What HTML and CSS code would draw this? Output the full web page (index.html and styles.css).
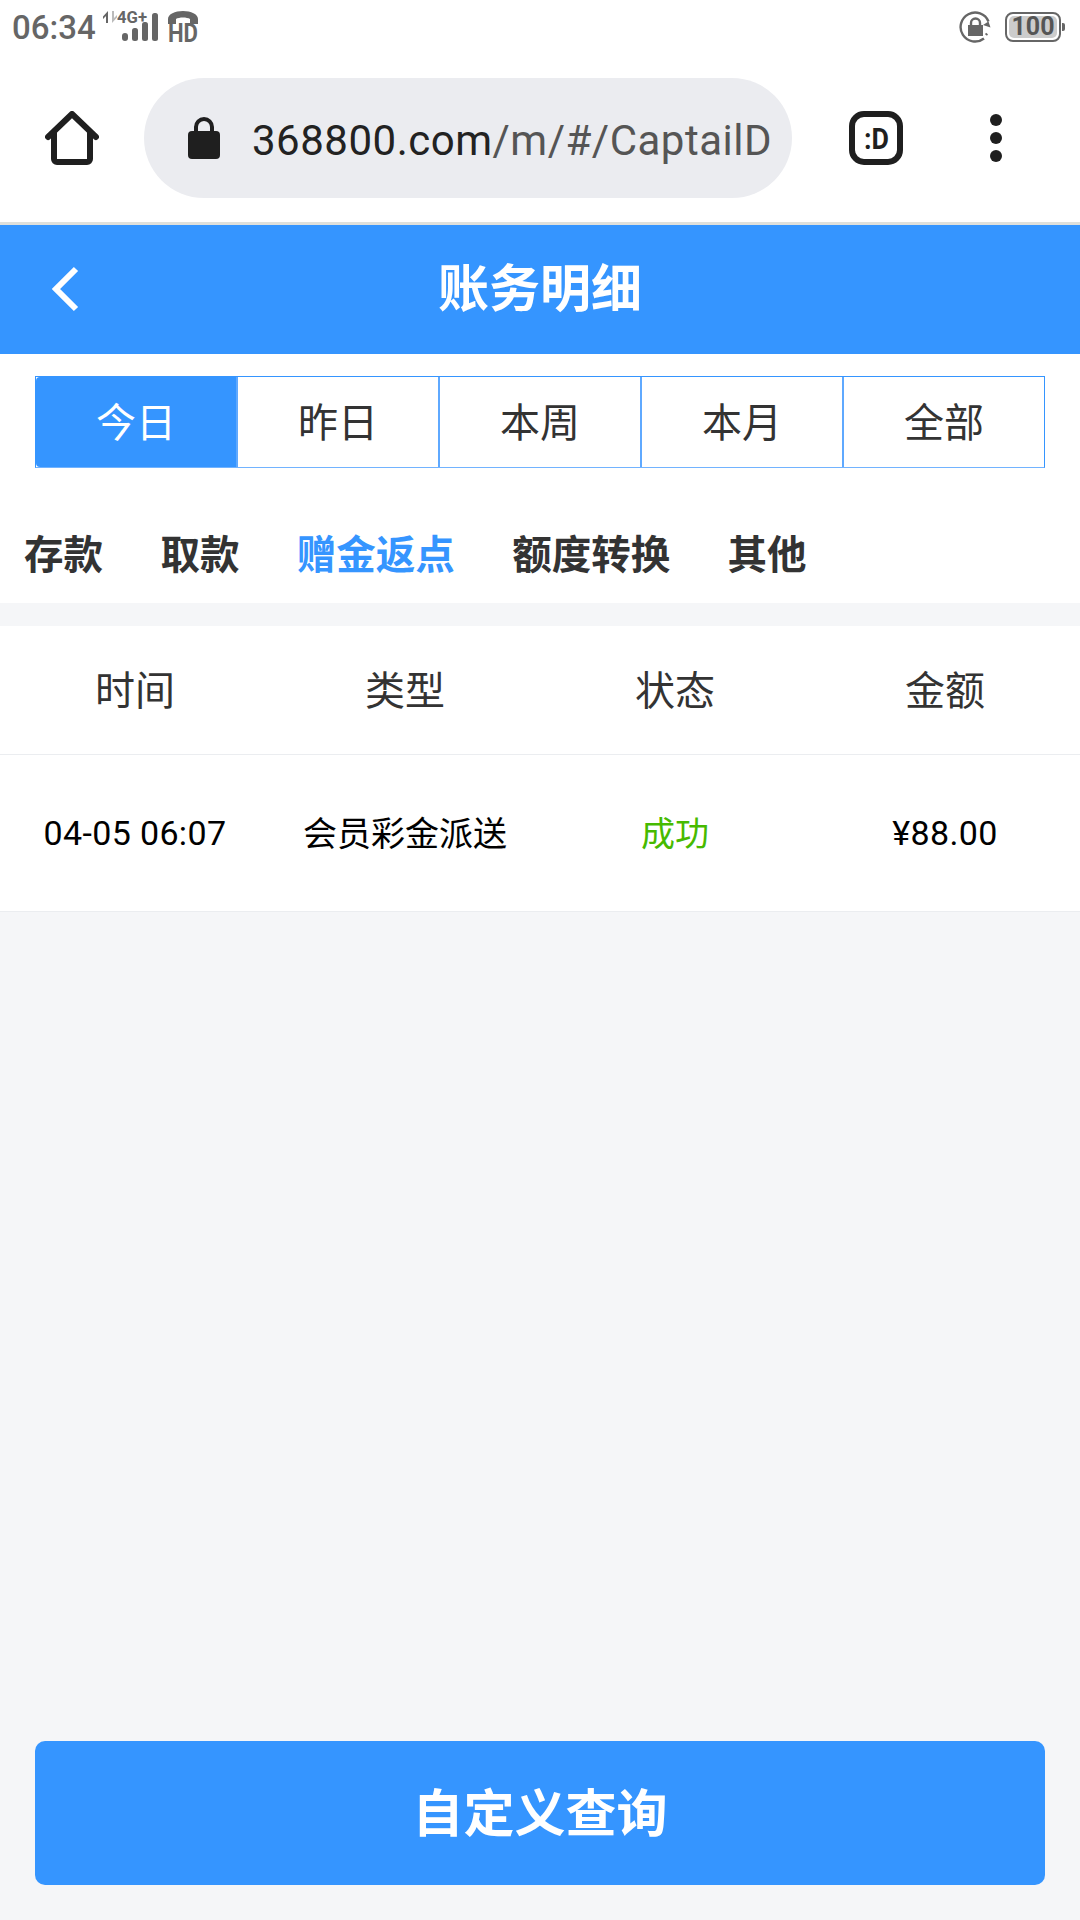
FILE: index.html
```html
<!DOCTYPE html>
<html lang="zh">
<head>
<meta charset="utf-8">
<title>账务明细</title>
<link rel="stylesheet" href="styles.css">
</head>
<body>
<div class="page">
  <div class="status">
    <div class="status-left">
      <span class="clock">06:34</span>
      <svg class="signal" width="60" height="36" viewBox="0 0 60 36">
        <path d="M5 5v12H3v-7l-3 3v-2.500z" fill="#666"/>
        <path d="M9 17V5h2v7l3-3v2.500z" fill="#bbb"/>
        <text x="14" y="17" class="signal-text" textLength="30" lengthAdjust="spacingAndGlyphs">4G+</text>
        <rect x="19" y="27" width="6" height="8" rx="3" fill="#666"/>
        <rect x="29" y="22" width="6" height="13" rx="2.500" fill="#666"/>
        <rect x="39" y="16" width="6" height="19" rx="2.500" fill="#666"/>
        <rect x="49" y="7" width="6" height="28" rx="2.500" fill="#666"/>
      </svg>
      <svg class="hd" width="40" height="40" viewBox="-5 0 40 40">
        <path d="M0 13V8C0 3 7 0 15 0s15 3 15 8v5h-8V8c-3-2-11-2-14 0v5z" fill="#666"/>
        <text x="0" y="31" class="hd-text" textLength="30" lengthAdjust="spacingAndGlyphs">HD</text>
      </svg>
    </div>
    <div class="status-right">
      <svg class="rotate" width="32" height="32" viewBox="0 0 32 32">
        <path d="M29.500 10.500A14.500 14.500 0 1 0 25 27.500M27 24l1-1.500" fill="none" stroke="#666" stroke-width="2.400"/>
        <path d="M24 14l5.500-3.500 2 6z" fill="#666"/>
        <rect x="9" y="14" width="15" height="11" fill="#666"/>
        <path d="M12 14v-2a4.500 4.500 0 0 1 9 0v2" fill="none" stroke="#666" stroke-width="2.400"/>
      </svg>
      <span class="battery"><span class="battery-fill">100</span></span>
      <span class="battery-tip"></span>
    </div>
  </div>

  <div class="browser">
    <svg class="home" width="54" height="54" viewBox="0 0 54 54"><path d="M3 26 27 3l24 23M9 21v27a3 3 0 0 0 3 3h30a3 3 0 0 0 3-3V21" fill="none" stroke="#1f1f1f" stroke-width="6" stroke-linecap="round" stroke-linejoin="round"/></svg>
    <div class="url">
      <svg class="lock" width="32" height="42" viewBox="0 0 32 42"><path d="M8 16V10a8 8 0 0 1 16 0v6" fill="none" stroke="#1f1f1f" stroke-width="4"/><rect y="14" width="32" height="28" rx="4" fill="#1f1f1f"/></svg>
      <span class="url-text"><span class="domain">368800.com</span>/m/#/CaptailD</span>
    </div>
    <svg class="tab" width="54" height="54" viewBox="0 0 54 54"><rect x="3" y="3" width="48" height="48" rx="12" fill="none" stroke="#1f1f1f" stroke-width="6"/><text x="15" y="38" class="tab-text" textLength="25" lengthAdjust="spacingAndGlyphs">:D</text></svg>
    <svg class="more" width="12" height="48" viewBox="0 0 12 48"><circle cx="6" cy="6" r="6" fill="#1f1f1f"/><circle cx="6" cy="24" r="6" fill="#1f1f1f"/><circle cx="6" cy="42" r="6" fill="#1f1f1f"/></svg>
  </div>

  <header class="title-bar">
    <svg class="back" width="30" height="46" viewBox="0 0 30 46"><path d="M26 3 6 23l20 20" fill="none" stroke="#fff" stroke-width="6"/></svg>
    <h1 class="title">账务明细</h1>
  </header>

  <section class="filters">
    <div class="range">
      <span class="range-item active">今日</span>
      <span class="range-item">昨日</span>
      <span class="range-item">本周</span>
      <span class="range-item">本月</span>
      <span class="range-item">全部</span>
    </div>
    <nav class="types">
      <span class="type">存款</span>
      <span class="type">取款</span>
      <span class="type current">赠金返点</span>
      <span class="type">额度转换</span>
      <span class="type">其他</span>
    </nav>
  </section>

  <section class="table">
    <div class="row head">
      <span>时间</span><span>类型</span><span>状态</span><span>金额</span>
    </div>
    <div class="row body">
      <span class="num">04-05 06:07</span><span class="cjk">会员彩金派送</span><span class="cjk ok">成功</span><span class="num">¥88.00</span>
    </div>
  </section>

  <div class="spacer"></div>

  <footer class="foot">
    <button class="query">自定义查询</button>
  </footer>
</div>
</body>
</html>
```
FILE: styles.css
```css
* { box-sizing: border-box; }
html, body { margin: 0; padding: 0; }
body { width: 1080px; height: 1920px; font-family: Roboto, "Noto Sans CJK SC", sans-serif; background: #f5f6f8; }
.page { display: flex; flex-direction: column; height: 1920px; }

.status { height: 56px; flex: none; background: #fff; display: flex; justify-content: space-between; padding: 0 15px 0 12px; align-items: flex-start; }
.status-left { display: flex; align-items: flex-start; height: 56px; }
.clock { font-size: 33px; font-weight: 500; color: #666; line-height: 32px; margin-top: 12px; }
.signal { display: block; flex: none; margin: 6px 0 0 7px; }
.signal-text { font: 700 17px Roboto, sans-serif; fill: #666; }
.hd { display: block; flex: none; margin: 11px 0 0 0; }
.hd-text { font: 700 25px Roboto, sans-serif; fill: #666; }
.status-right { display: flex; align-items: flex-start; padding-top: 11px; }
.rotate { display: block; flex: none; }
.battery { display: flex; width: 56px; height: 30px; border: 2px solid #666; border-radius: 8px; padding: 2px; margin: 1px 0 0 14px; }
.battery-fill { flex: 1; background: #ccc; border-radius: 5px; font-size: 25px; font-weight: 700; line-height: 22px; color: #555; text-align: center; }
.battery-tip { width: 3px; height: 8px; background: #666; margin: 12px 0 0 1px; border-radius: 0 2px 2px 0; }

.browser { height: 169px; flex: none; background: #fff; border-bottom: 3px solid #dfe0dc; display: flex; align-items: flex-start; }
.home { flex: none; margin: 55px 0 0 45px; }
.url { flex: none; width: 648px; height: 120px; margin: 22px 0 0 45px; background: #ebecf0; border-radius: 60px; display: flex; align-items: center; padding-left: 44px; overflow: hidden; }
.lock { flex: none; }
.url-text { font-size: 42px; line-height: 50px; color: #555; margin: 6px 0 0 32px; white-space: nowrap; letter-spacing: 0.5px; }
.domain { color: #222; }
.tab { flex: none; margin: 55px 0 0 57px; }
.tab-text { font: 700 30px Roboto, sans-serif; fill: #1f1f1f; }
.more { flex: none; margin: 58px 0 0 87px; }

.title-bar { height: 129px; flex: none; background: #3595ff; display: flex; align-items: center; justify-content: center; position: relative; }
.title { margin: 0; font-size: 51px; font-weight: 700; color: #fff; line-height: 1; }
.back { position: absolute; left: 50px; top: 41px; }

.filters { background: #fff; flex: none; height: 249px; padding-top: 22px; }
.range { display: flex; margin: 0 35px; height: 92px; border: 1px solid #3595ff; border-bottom-color: #72b3ff; }
.range-item { flex: 1; display: flex; align-items: center; justify-content: center; padding-bottom: 4px; font-size: 40px; color: #333; border-left: 2px solid #5fa9ff; }
.range-item:first-child { border-left: none; }
.range-item.active { background: #3595ff; color: #fff; border-radius: 4px 0 0 4px; }
.types { display: flex; gap: 57.4px; padding: 59px 0 0 24px; }
.type { font-size: 39.5px; font-weight: 700; color: #333; line-height: 58px; }
.type.current { color: #3595ff; }

.table { flex: none; margin-top: 23px; background: #fff; }
.row { display: grid; grid-template-columns: repeat(4, 1fr); text-align: center; align-items: center; }
.head { height: 129px; padding-bottom: 4px; font-size: 40px; color: #333; border-bottom: 1px solid #ebedf0; }
.body { height: 157px; font-size: 34px; color: #000; border-bottom: 1px solid #ebedf0; }
.num { letter-spacing: 0.35px; }
.cjk { padding-bottom: 3px; }
.ok { color: #47ba00; }

.spacer { flex: 1; }
.foot { flex: none; padding: 0 35px 35px; }
.query { display: block; width: 100%; height: 144px; border: 0; border-radius: 10px; padding: 0 0 7px; background: #3595ff; color: #fff; font-family: inherit; font-size: 51px; font-weight: 700; }
```
